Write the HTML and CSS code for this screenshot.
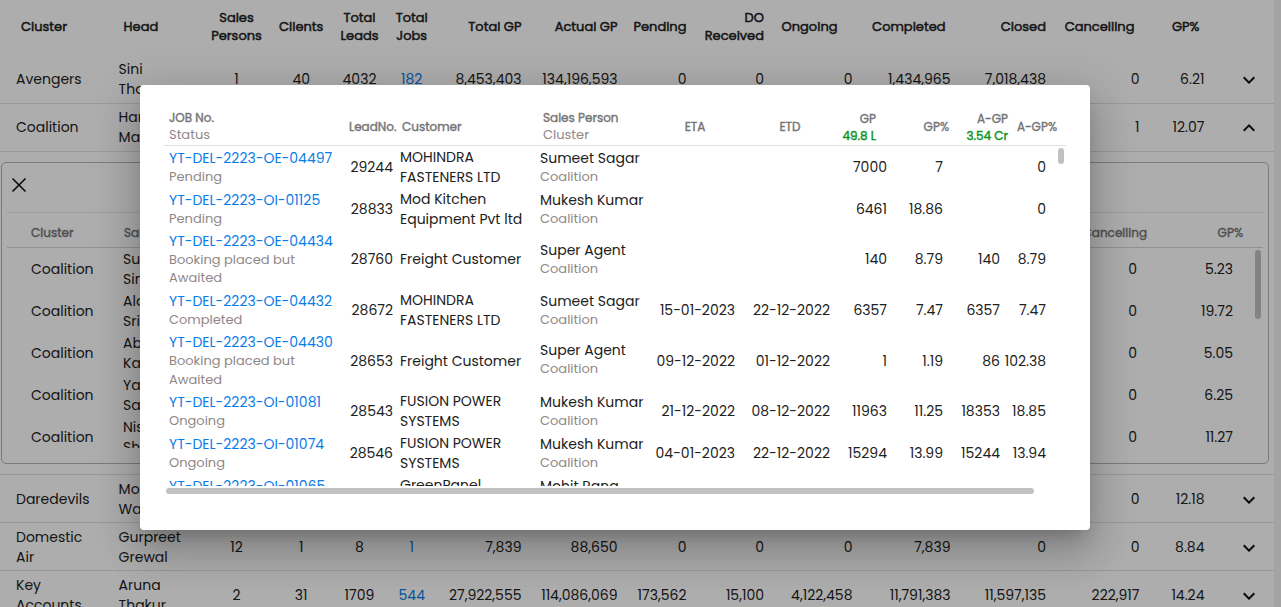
FILE: index.html
```
<!DOCTYPE html>
<html lang="en">
<head>
<meta charset="utf-8">
<title>Cluster performance</title>
<link rel="stylesheet" href="styles.css">
</head>
<body>
<svg class="defs" aria-hidden="true">
  <symbol id="down" viewBox="0 0 24 24"><path d="M7.41 8.59 12 13.17l4.59-4.58L18 10l-6 6-6-6z"/></symbol>
  <symbol id="up" viewBox="0 0 24 24"><path d="M7.41 15.41 12 10.83l4.59 4.58L18 14l-6-6-6 6z"/></symbol>
  <symbol id="close" viewBox="0 0 24 24"><path d="M5.5 5.5l13 13M18.500 5.500l-13 13" fill="none" stroke="#111" stroke-width="1.600"/></symbol>
</svg>

<div class="page">
  <main class="table">
    <div class="row head">
      <span class="ind">Cluster</span><span class="ind">Head</span><span class="c">Sales<br>Persons</span><span class="c">Clients</span><span class="c">Total<br>Leads</span><span class="c">Total<br>Jobs</span><span class="r">Total GP</span><span class="r">Actual GP</span><span class="r">Pending</span><span class="r">DO<br>Received</span><span class="r far">Ongoing</span><span class="r near">Completed</span><span class="r">Closed</span><span class="r near">Cancelling</span><span class="r near">GP%</span><span></span>
    </div>
    <div class="row upper">
      <span>Avengers</span><span>Sini<br>Thomas</span><span class="c">1</span><span class="c">40</span><span class="c">4032</span><span class="c link">182</span><span class="r">8,453,403</span><span class="r">134,196,593</span><span class="r">0</span><span class="r">0</span><span class="r">0</span><span class="r">1,434,965</span><span class="r">7,018,438</span><span class="r">0</span><span class="r">6.21</span><svg class="chev"><use href="#down"/></svg>
    </div>
    <div class="row upper">
      <span>Coalition</span><span>Harish<br>Malik</span><span></span><span></span><span></span><span></span><span></span><span></span><span></span><span></span><span></span><span></span><span></span><span class="r">1</span><span class="r">12.07</span><svg class="chev"><use href="#up"/></svg>
    </div>
    <div class="detail">
      <section class="panel">
        <div class="panel-bar"><svg class="close"><use href="#close"/></svg></div>
        <div class="prow phead"><span>Cluster</span><span class="pad">Sales Person</span><span class="r over">Cancelling</span><span class="r over">GP%</span></div>
        <div class="plist">
          <div class="pbody">
            <div class="prow"><span>Coalition</span><span>Sumeet<br>Singh</span><span class="r">0</span><span class="r">5.23</span></div>
            <div class="prow"><span>Coalition</span><span>Alok<br>Srivastava</span><span class="r">0</span><span class="r">19.72</span></div>
            <div class="prow"><span>Coalition</span><span>Abhishek<br>Kapoor</span><span class="r">0</span><span class="r">5.05</span></div>
            <div class="prow"><span>Coalition</span><span>Yash<br>Saxena</span><span class="r">0</span><span class="r">6.25</span></div>
            <div class="prow"><span>Coalition</span><span>Nisha<br>Sharma</span><span class="r">0</span><span class="r">11.27</span></div>
          </div>
          <div class="pthumb"></div>
        </div>
      </section>
    </div>
    <div class="row">
      <span>Daredevils</span><span>Mohit<br>Walia</span><span></span><span></span><span></span><span></span><span></span><span></span><span></span><span></span><span></span><span></span><span></span><span class="r">0</span><span class="r">12.18</span><svg class="chev"><use href="#down"/></svg>
    </div>
    <div class="row">
      <span>Domestic<br>Air</span><span>Gurpreet<br>Grewal</span><span class="c">12</span><span class="c">1</span><span class="c">8</span><span class="c link">1</span><span class="r">7,839</span><span class="r">88,650</span><span class="r">0</span><span class="r">0</span><span class="r">0</span><span class="r">7,839</span><span class="r">0</span><span class="r">0</span><span class="r">8.84</span><svg class="chev"><use href="#down"/></svg>
    </div>
    <div class="row">
      <span>Key<br>Accounts</span><span>Aruna<br>Thakur</span><span class="c">2</span><span class="c">31</span><span class="c">1709</span><span class="c link">544</span><span class="r">27,922,555</span><span class="r">114,086,069</span><span class="r">173,562</span><span class="r">15,100</span><span class="r">4,122,458</span><span class="r">11,791,383</span><span class="r">11,597,135</span><span class="r">222,917</span><span class="r">14.24</span><svg class="chev"><use href="#down"/></svg>
    </div>
  </main>
  <div class="gutter"></div>
</div>

<div class="backdrop"></div>
<div class="dialog">
  <div class="jhead">
    <span><b>JOB No.</b><br><i>Status</i></span><b>LeadNo.</b><b>Customer</b><span><b>Sales Person</b><br><i>Cluster</i></span><b class="c">ETA</b><b class="c">ETD</b><span class="r sum"><b>GP</b><br><b class="green">49.8 L</b></span><b class="r">GP%</b><span class="r sum"><b>A-GP</b><br><b class="green">3.54 Cr</b></span><b class="r">A-GP%</b>
  </div>
  <div class="jlist">
    <div class="jbody">
      <div class="jrow"><span><a>YT-DEL-2223-OE-04497</a><i>Pending</i></span><span class="r">29244</span><span class="cust">MOHINDRA<br>FASTENERS LTD</span><span>Sumeet Sagar<i>Coalition</i></span><span></span><span></span><span class="r">7000</span><span class="r">7</span><span></span><span class="r">0</span></div>
      <div class="jrow"><span><a>YT-DEL-2223-OI-01125</a><i>Pending</i></span><span class="r">28833</span><span class="cust">Mod Kitchen<br>Equipment Pvt ltd</span><span>Mukesh Kumar<i>Coalition</i></span><span></span><span></span><span class="r">6461</span><span class="r">18.86</span><span></span><span class="r">0</span></div>
      <div class="jrow tall"><span><a>YT-DEL-2223-OE-04434</a><i>Booking placed but<br>Awaited</i></span><span class="r">28760</span><span class="cust">Freight Customer</span><span>Super Agent<i>Coalition</i></span><span></span><span></span><span class="r">140</span><span class="r">8.79</span><span class="r">140</span><span class="r">8.79</span></div>
      <div class="jrow"><span><a>YT-DEL-2223-OE-04432</a><i>Completed</i></span><span class="r">28672</span><span class="cust">MOHINDRA<br>FASTENERS LTD</span><span>Sumeet Sagar<i>Coalition</i></span><span class="r">15-01-2023</span><span class="r">22-12-2022</span><span class="r">6357</span><span class="r">7.47</span><span class="r">6357</span><span class="r">7.47</span></div>
      <div class="jrow tall second"><span><a>YT-DEL-2223-OE-04430</a><i>Booking placed but<br>Awaited</i></span><span class="r">28653</span><span class="cust">Freight Customer</span><span class="agent">Super Agent<i>Coalition</i></span><span class="r">09-12-2022</span><span class="r">01-12-2022</span><span class="r">1</span><span class="r">1.19</span><span class="r">86</span><span class="r">102.38</span></div>
      <div class="jrow"><span><a>YT-DEL-2223-OI-01081</a><i>Ongoing</i></span><span class="r">28543</span><span class="cust">FUSION POWER<br>SYSTEMS</span><span>Mukesh Kumar<i>Coalition</i></span><span class="r">21-12-2022</span><span class="r">08-12-2022</span><span class="r">11963</span><span class="r">11.25</span><span class="r">18353</span><span class="r">18.85</span></div>
      <div class="jrow"><span><a>YT-DEL-2223-OI-01074</a><i>Ongoing</i></span><span class="r">28546</span><span class="cust">FUSION POWER<br>SYSTEMS</span><span>Mukesh Kumar<i>Coalition</i></span><span class="r">04-01-2023</span><span class="r">22-12-2022</span><span class="r">15294</span><span class="r">13.99</span><span class="r">15244</span><span class="r">13.94</span></div>
      <div class="jrow"><span><a>YT-DEL-2223-OI-01065</a><i>Ongoing</i></span><span></span><span class="cust">GreenPanel<br>Industries</span><span>Mohit Rana<i>Coalition</i></span><span></span><span></span><span></span><span></span><span></span><span></span></div>
    </div>
    <div class="jthumb"></div>
  </div>
  <div class="hthumb"></div>
</div>
</body>
</html>
```
FILE: styles.css
```
* { box-sizing: border-box; }
html, body { height: 100%; }
body {
  margin: 0;
  overflow: hidden;
  background: #fff;
  color: #212121;
  font: 14px/20px Poppins, Inter, sans-serif;
}
.defs { display: none; }
b { font-weight: 400; -webkit-text-stroke: 0.4px currentColor; }
i { font-style: normal; color: #8f8787; font-size: 13px; line-height: 18px; }
.c { text-align: center; }
.r { text-align: right; }

.page { display: flex; height: 607px; overflow: hidden; }
.table { width: 1274px; }
.gutter { width: 7px; background: #f1f1f1; }
.row {
  display: grid;
  grid-template-columns: 102.600px 83.400px 69px 60.500px 56px 48.500px 85.500px 96px 69px 77.500px 88.500px 98px 95.500px 93.500px 65px 69px;
  align-items: center;
  height: 48px;
  padding-left: 16px;
  border-bottom: 1px solid #e0e0e0;
  white-space: nowrap;
}
.row.upper { padding-bottom: 1px; }
.row.head {
  height: 56px;
  padding-bottom: 3px;
  border: 0;
  font-size: 13px;
  line-height: 18px;
  -webkit-text-stroke: 0.5px currentColor;
}
.ind { padding-left: 5px; }
.near { padding-right: 5px; }
.far { padding-right: 15px; }
.link { color: #0a7ce8; }
.chev { width: 24px; height: 24px; margin: 2px 0 0 33px; fill: #111; }

.detail { height: 323px; padding: 10px 5px 0 1px; border-bottom: 1px solid #e0e0e0; }
.panel { height: 302px; padding: 0 5px; border: 1px solid #b5b5b5; border-radius: 5px; }
.panel-bar { height: 50px; padding: 10px 0 0; border-bottom: 1px solid #e8e8e8; }
.close { width: 24px; height: 24px; fill: #111; display: block; }
.prow {
  display: grid;
  grid-template-columns: 92px 200px 1fr 96px;
  align-items: center;
  height: 42px;
  padding: 0 30px 0 24px;
  white-space: nowrap;
}
.phead { height: 35px; padding-top: 5px; border-bottom: 1px solid #d4d4d4; color: #757575; font-size: 12px; -webkit-text-stroke: 0.4px currentColor; }
.pad { padding-left: 1px; }
.over { margin-right: -10px; }
.plist { display: flex; height: 200px; overflow: hidden; }
.pbody { flex: 1; margin-right: -8px; }
.pthumb { width: 6px; height: 69px; margin: 2px 2px 0 0; border-radius: 3px; background: #c1c1c1; }

.backdrop { position: absolute; inset: 0; background: rgba(0, 0, 0, 0.32); }
.dialog {
  position: absolute;
  left: 140px;
  top: 85px;
  width: 950px;
  height: 445px;
  padding: 15px 24px 0;
  border-radius: 4px;
  background: #fff;
  box-shadow: 0 11px 15px -7px rgba(0,0,0,.2), 0 24px 38px 3px rgba(0,0,0,.14), 0 9px 46px 8px rgba(0,0,0,.12);
}
.jhead {
  display: grid;
  grid-template-columns: 180px 53px 141px 122px 60px 130px 21px 73px 59px 49px;
  align-items: center;
  height: 46px;
  padding: 6px 0 0 5px;
  border-bottom: 1px solid #e0e0e0;
  color: #757575;
  font-size: 12px;
  line-height: 17px;
  white-space: nowrap;
}
.jhead > b { padding-top: 1px; }
.jhead i { line-height: 17px; }
.jhead > :nth-child(7) { margin-left: -40px; }
.sum { padding-top: 2px; }
.green { color: #0a9420; }
.jlist { display: flex; height: 340px; overflow: hidden; }
.jbody { width: 894px; }
.jrow {
  display: grid;
  grid-template-columns: 170px 54px 147px 100px 95px 95px 57px 56px 57px 46px;
  align-items: center;
  height: 42px;
  padding-left: 5px;
  white-space: nowrap;
}
.tall { height: 59px; padding-bottom: 1px; }
.jrow i { display: block; }
.jrow a { display: block; color: #0a7ce8; }
.second { padding-bottom: 0; }
.second i { line-height: 18.5px; }
.agent { padding-bottom: 2px; }
.cust { padding-left: 7px; }
.jthumb { width: 6px; height: 16px; margin-top: 2px; border-radius: 3px; background: #c1c1c1; }
.hthumb { width: 868px; height: 6px; margin: 2px 0 0 2px; border-radius: 3px; background: #c1c1c1; }
```
